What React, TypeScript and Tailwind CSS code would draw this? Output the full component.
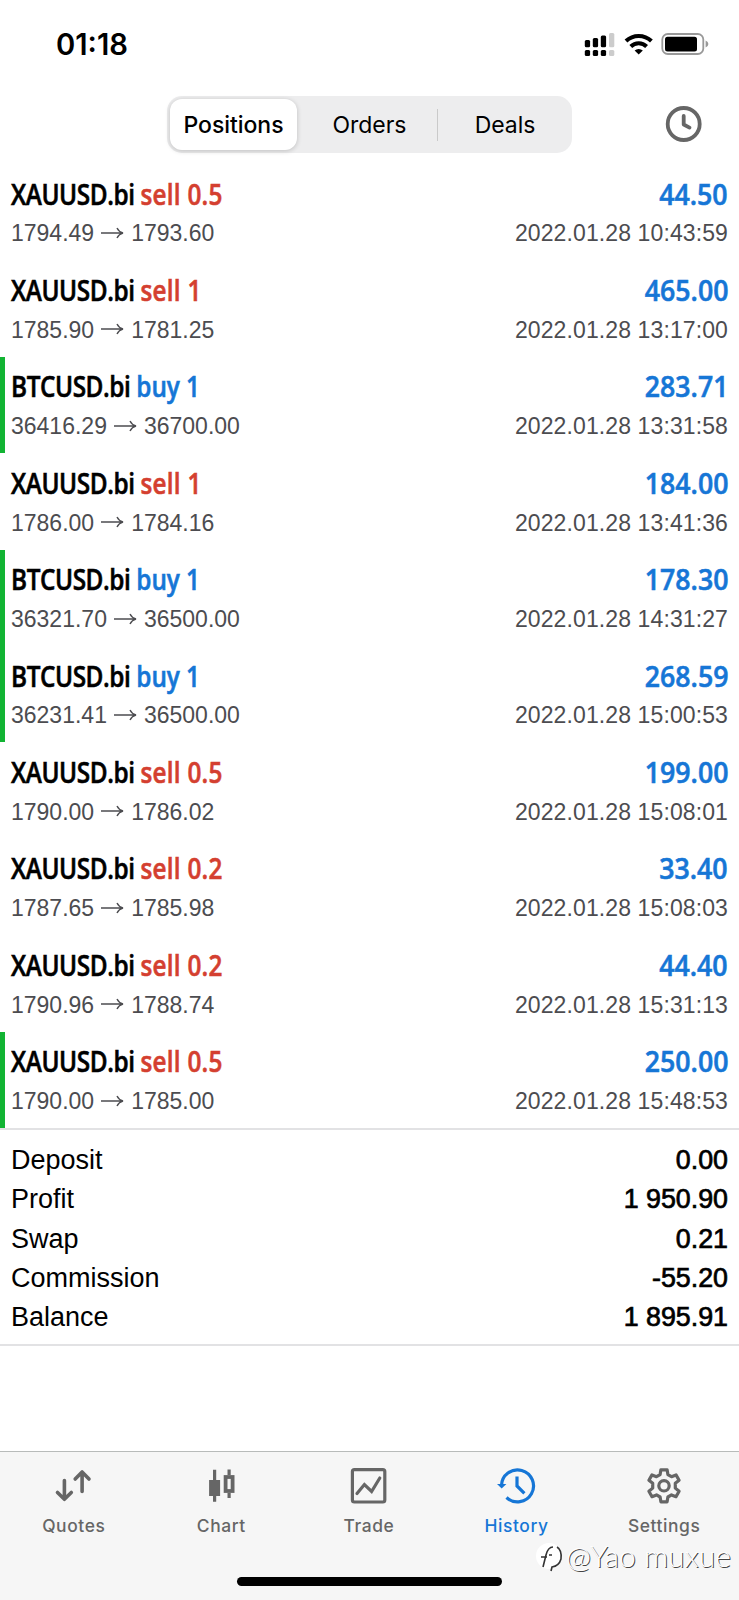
import type { ReactNode } from "react";

type Deal = {
  symbol: string;
  side: "sell" | "buy";
  volume: string;
  open: string;
  close: string;
  profit: string;
  time: string;
  marked?: boolean;
};

const deals: Deal[] = [
  { symbol: "XAUUSD.bi", side: "sell", volume: "0.5", open: "1794.49", close: "1793.60", profit: "44.50", time: "2022.01.28 10:43:59" },
  { symbol: "XAUUSD.bi", side: "sell", volume: "1", open: "1785.90", close: "1781.25", profit: "465.00", time: "2022.01.28 13:17:00" },
  { symbol: "BTCUSD.bi", side: "buy", volume: "1", open: "36416.29", close: "36700.00", profit: "283.71", time: "2022.01.28 13:31:58", marked: true },
  { symbol: "XAUUSD.bi", side: "sell", volume: "1", open: "1786.00", close: "1784.16", profit: "184.00", time: "2022.01.28 13:41:36" },
  { symbol: "BTCUSD.bi", side: "buy", volume: "1", open: "36321.70", close: "36500.00", profit: "178.30", time: "2022.01.28 14:31:27", marked: true },
  { symbol: "BTCUSD.bi", side: "buy", volume: "1", open: "36231.41", close: "36500.00", profit: "268.59", time: "2022.01.28 15:00:53", marked: true },
  { symbol: "XAUUSD.bi", side: "sell", volume: "0.5", open: "1790.00", close: "1786.02", profit: "199.00", time: "2022.01.28 15:08:01" },
  { symbol: "XAUUSD.bi", side: "sell", volume: "0.2", open: "1787.65", close: "1785.98", profit: "33.40", time: "2022.01.28 15:08:03" },
  { symbol: "XAUUSD.bi", side: "sell", volume: "0.2", open: "1790.96", close: "1788.74", profit: "44.40", time: "2022.01.28 15:31:13" },
  { symbol: "XAUUSD.bi", side: "sell", volume: "0.5", open: "1790.00", close: "1785.00", profit: "250.00", time: "2022.01.28 15:48:53", marked: true },
];

const totals = [
  ["Deposit", "0.00"],
  ["Profit", "1 950.90"],
  ["Swap", "0.21"],
  ["Commission", "-55.20"],
  ["Balance", "1 895.91"],
];

function StatusBar() {
  return (
    <div className="flex h-[96px] shrink-0 items-start justify-between pl-[56px] pr-[30px]">
      <span className="mt-[27px] text-[29.2px] leading-[36px] font-semibold">01:18</span>
      <svg className="mt-[30px]" width="126" height="30" viewBox="583 30 126 30" fill="#000">
        <rect x="584.8" y="40" width="5.3" height="7.2" rx="1.5" />
        <rect x="592.8" y="38" width="5.3" height="9.2" rx="1.5" />
        <rect x="600.8" y="35.5" width="5.3" height="11.7" rx="1.5" />
        <rect x="609" y="33" width="5.3" height="14.2" rx="1.5" fill="#ccc" />
        <rect x="584.8" y="50" width="5.3" height="6" rx="1.5" />
        <rect x="592.8" y="50" width="5.3" height="6" rx="1.5" />
        <rect x="600.8" y="50" width="5.3" height="6" rx="1.5" />
        <rect x="609" y="50" width="5.3" height="6" rx="1.5" fill="#ccc" />
        <g fill="none" stroke="#000" strokeWidth="4">
          <path d="M626 41 A18.3 18.3 0 0 1 651.4 41" />
          <path d="M630.8 46.5 A11.2 11.2 0 0 1 646.6 46.5" />
        </g>
        <path d="M638.7 54.4 L634.6 50.6 A6 6 0 0 1 642.8 50.6 Z" />
        <rect x="662.3" y="34" width="41" height="20" rx="5.5" fill="none" stroke="#999" strokeWidth="1.8" />
        <rect x="665" y="36.8" width="32" height="14.8" rx="2.5" />
        <path d="M705.6 40.6 Q708.4 41.8 708.4 44 Q708.4 46.2 705.6 47.4 Z" fill="#999" />
      </svg>
    </div>
  );
}

function Header() {
  return (
    <div className="flex h-[68px] shrink-0 items-start pl-[167px]">
      <div className="flex h-[57px] w-[405px] items-center rounded-[15px] bg-[#ededee] p-[3px] text-[23px] tracking-[-0.05px]">
        <div className="flex h-[51px] w-[127px] items-center justify-center rounded-[12px] bg-white pt-[2px] font-medium shadow-[0_1px_5px_rgba(0,0,0,0.2)]">
          Positions
        </div>
        <div className="flex w-[140px] items-center justify-center pl-[5px] pt-[2px]">Orders</div>
        <div className="h-[32px] w-px bg-[#cacaca]" />
        <div className="flex flex-1 items-center justify-center pl-[3px] pt-[2px]">Deals</div>
      </div>
      <svg className="ml-[92px] mt-[8px]" width="40" height="40" viewBox="0 0 40 40" fill="none" stroke="#666" strokeWidth="3.8">
        <circle cx="19.7" cy="20" r="16" />
        <path d="M19.7 12V20.5L25.5 23.6" strokeLinecap="round" strokeLinejoin="round" />
      </svg>
    </div>
  );
}

function Arrow() {
  return (
    <svg className="mx-[7px] h-[23px] w-[23px]" viewBox="0 0 23 23" fill="none" stroke="#4c4c50" strokeWidth="1.4">
      <path d="M0 11H22M16 6Q18 10 22 11Q18 12 16 16" />
    </svg>
  );
}

function DealRow({ deal }: { deal: Deal }) {
  return (
    <div className="flex h-[96.42px] shrink-0">
      <div className={deal.marked ? "w-[5px] bg-[#12b433]" : "w-[5px]"} />
      <div className="flex flex-1 flex-col pl-[6px] pr-[11px] pt-[11.5px]">
        <div className="flex h-[36px] items-center justify-between whitespace-nowrap font-['Open_Sans'] text-[29.5px] font-semibold leading-[36px]">
          <span className="origin-left scale-x-[0.825] tracking-[-0.5px] [-webkit-text-stroke:0.6px_currentColor]">
            {deal.symbol}{" "}
            <span className={deal.side === "sell" ? "tracking-[0.3px] text-[#d43f30]" : "tracking-[-0.1px] text-[#1676d6]"}>{deal.side} {deal.volume}</span>
          </span>
          <span className="origin-right scale-x-[0.905] text-[#1676d6] [-webkit-text-stroke:0.6px_currentColor]">{deal.profit}</span>
        </div>
        <div className="mt-[7.9px] flex h-[28px] items-center justify-between font-['Liberation_Sans'] text-[23px] leading-[28px] text-[#4c4c50]">
          <span className="flex items-center">
            {deal.open}
            <Arrow />
            {deal.close}
          </span>
          <span className="tracking-[0.11px]">{deal.time}</span>
        </div>
      </div>
    </div>
  );
}

function Tab({ label, active, children }: { label: string; active?: boolean; children: ReactNode }) {
  return (
    <div className={active ? "flex flex-1 flex-col items-center text-[#1676d6]" : "flex flex-1 flex-col items-center text-[#666]"}>
      <svg className="mt-[14px]" width="40" height="40" viewBox="0 0 40 40" fill="none" stroke="currentColor" strokeWidth="3.2">
        {children}
      </svg>
      <span className="mt-[8px] text-[17.4px] font-medium leading-[24px] tracking-[0.6px]">{label}</span>
    </div>
  );
}

export default function App() {
  return (
    <div className="relative flex h-[1600px] w-[739px] flex-col overflow-hidden bg-white font-['Inter',sans-serif] text-black">
      <StatusBar />
      <Header />
      {deals.map((d) => (
        <DealRow key={d.time} deal={d} />
      ))}
      <div className="flex h-[218px] shrink-0 flex-col border-y-2 border-[#e2e2e4] px-[11px] pt-[11px] font-['Liberation_Sans'] text-[27px]">
        {totals.map(([label, value]) => (
          <div key={label} className="flex h-[39.3px] items-center justify-between leading-[39.3px]">
            <span>{label}</span>
            <span className="text-[26.8px] [-webkit-text-stroke:0.7px_#000]">{value}</span>
          </div>
        ))}
      </div>
      <div className="mt-auto flex h-[149px] shrink-0 flex-col border-t border-[#b8bbba] bg-[#f6f6f6]">
        <div className="flex h-[125px] pr-px">
          <Tab label="Quotes">
            <g strokeWidth="3.6" strokeLinecap="round" strokeLinejoin="round">
              <path d="M10.4 14.5V33M3.5 26.5L10.4 33.3L17.3 26.5" />
              <path d="M28.1 25.5V6M21.2 13L28.1 6L35 13" />
            </g>
          </Tab>
          <Tab label="Chart">
            <path d="M13.6 3.7V35.7M28.1 3.4V9M28.1 27V32" />
            <rect x="8.1" y="14" width="11" height="16" fill="currentColor" stroke="none" />
            <rect x="24.6" y="11" width="7" height="14" strokeWidth="3.8" />
          </Tab>
          <Tab label="Trade">
            <rect x="3.4" y="3.6" width="32.4" height="32.4" rx="2" />
            <path d="M8 27.6L15.4 18.6L22.6 25.5L30.8 12" strokeLinecap="round" />
          </Tab>
          <Tab label="History" active>
            <path d="M4.5 19.5A16 16 0 1 1 9.5 31.5" />
            <path d="M0 18H9.4L4.7 22.6Z" fill="currentColor" stroke="none" />
            <path d="M20 10.5V20L27.4 27.4" />
          </Tab>
          <Tab label="Settings">
            <path d="M16.9 3.8H23.1L23.9 8.6L27.5 10.7L32 8.9L35.1 14.3L31.3 17.3V22.1L35.1 25.3L32 30.7L27.5 28.9L23.9 31L23.1 35.8H16.9L16.1 31L12.5 28.9L8 30.7L4.9 25.3L8.7 22.1V17.3L4.9 14.3L8 8.9L12.5 10.7L16.1 8.6Z" strokeLinejoin="round" />
            <circle cx="20" cy="19.8" r="5.2" />
          </Tab>
        </div>
        <div className="mx-auto h-[9px] w-[265px] rounded-full bg-black" />
      </div>
      <div className="absolute left-[536px] top-[1537px] flex items-center">
        <svg width="30" height="36" viewBox="0 0 30 36" fill="none">
          <circle cx="13" cy="19" r="13" fill="#fff" />
          <path d="M5 20H11M7 30L10 18Q12 10 17 10M13 18H16M21 10Q26 13 25 22Q23 29 16 30L15 34" stroke="#333" strokeWidth="1.6" />
        </svg>
        <span className="whitespace-nowrap font-['Lato'] text-[30px] font-light leading-[36px] text-white [text-shadow:1px_1px_0_#444]">@Yao muxue</span>
      </div>
    </div>
  );
}
